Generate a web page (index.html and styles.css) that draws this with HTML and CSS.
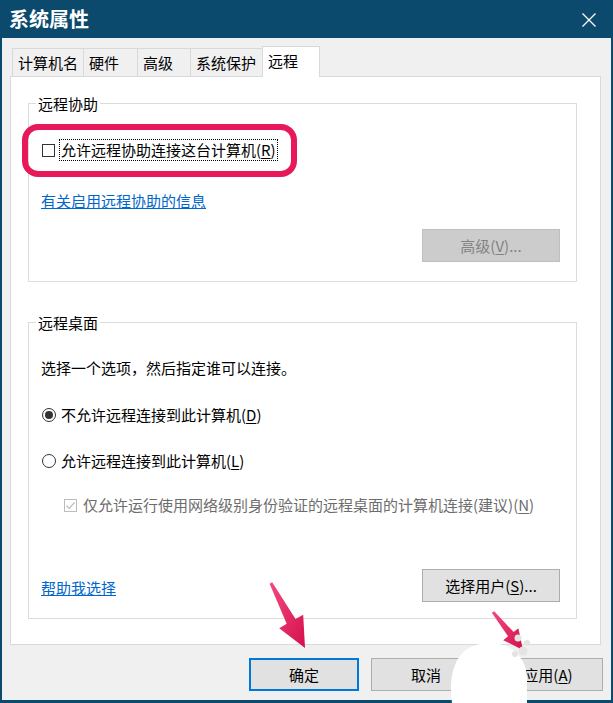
FILE: index.html
```html
<!DOCTYPE html>
<html lang="zh-CN">
<head>
<meta charset="utf-8">
<title>系统属性</title>
<link rel="stylesheet" href="styles.css">
</head>
<body>
<div class="window">
  <div class="titlebar">
    <span class="title">系统属性</span>
    <svg class="close" width="14" height="14" viewBox="0 0 14 14"><path d="M0.5 0.5L13.5 13.5M13.5 0.5L0.5 13.5" stroke="#ffffff" stroke-width="1.3" fill="none"/></svg>
  </div>
  <div class="client">
    <div class="tabs">
      <div class="tab t1">计算机名</div>
      <div class="tab t2">硬件</div>
      <div class="tab t3">高级</div>
      <div class="tab t4">系统保护</div>
      <div class="tab t5 active">远程</div>
    </div>
    <div class="panel">
      <div class="group g1">
        <span class="legend">远程协助</span>
        <div class="row r-assist">
          <span class="check"></span>
          <span class="label focus">允许远程协助连接这台计算机(<u>R</u>)</span>
        </div>
        <div class="highlight"></div>
        <div class="row r-link"><a class="link">有关启用远程协助的信息</a></div>
        <div class="btn-row r-adv"><button class="btn disabled">高级(<u>V</u>)...</button></div>
      </div>
      <div class="group g2">
        <span class="legend">远程桌面</span>
        <div class="row r-desc">选择一个选项，然后指定谁可以连接。</div>
        <div class="row r-radio1">
          <span class="radio on"></span>
          <span class="label">不允许远程连接到此计算机(<u>D</u>)</span>
        </div>
        <div class="row r-radio2">
          <span class="radio"></span>
          <span class="label">允许远程连接到此计算机(<u>L</u>)</span>
        </div>
        <div class="row r-nla">
          <span class="check checked-disabled">
            <svg width="11" height="11" viewBox="0 0 11 11"><path d="M1.5 5.8L4.2 8.4L9.6 2.4" stroke="#bdbdbd" stroke-width="1.3" fill="none"/></svg>
          </span>
          <span class="label muted">仅允许运行使用网络级别身份验证的远程桌面的计算机连接(建议)(<u>N</u>)</span>
        </div>
        <div class="bottom-row">
          <a class="link help">帮助我选择</a>
          <button class="btn">选择用户(<u>S</u>)...</button>
        </div>
      </div>
    </div>
    <div class="footer">
      <button class="btn fbtn primary">确定</button>
      <button class="btn fbtn">取消</button>
      <button class="btn fbtn">应用(<u>A</u>)</button>
    </div>
  </div>
  <svg class="overlay" width="613" height="703" viewBox="0 0 613 703">
    <defs>
      <linearGradient id="pk" x1="0" y1="0" x2="1" y2="1">
        <stop offset="0" stop-color="#f24a80"/>
        <stop offset="1" stop-color="#d5104c"/>
      </linearGradient>
    </defs>
    <polygon fill="url(#pk)" points="269.6,583.7 286.7,623.7 279.2,628.2 305,648 303.2,614.8 295.5,619.1 272.2,582.3"/>
    <polygon fill="url(#pk)" points="491.8,612.8 508.0,636.3 503.2,640.2 523,650 518.4,628.2 513.6,632.1 494.2,611.2"/>
    <path fill="#ffffff" d="M452,703 C449,683 452,660 466,650 C478,641 498,641 510,648 C521,655 528,666 527,682 L527,703 Z"/>
    <g fill="#e4e4e4">
      <circle cx="518" cy="638" r="3.5"/>
      <circle cx="527" cy="643" r="3"/>
      <circle cx="523" cy="651" r="4.5"/>
      <circle cx="515" cy="654" r="3"/>
    </g>
  </svg>
</div>
</body>
</html>
```
FILE: styles.css
```css
* { box-sizing: border-box; }
html, body { margin: 0; padding: 0; }
body {
  width: 613px;
  height: 703px;
  overflow: hidden;
  font-family: "Noto Sans CJK SC", "Noto Sans", sans-serif;
  font-size: 15px;
  color: #000;
  background: #0c4a6d;
}
.window {
  position: relative;
  width: 613px;
  height: 703px;
  display: flex;
  flex-direction: column;
  background: #0c4a6d;
}
.titlebar {
  height: 38px;
  flex: none;
  display: flex;
  align-items: center;
  justify-content: space-between;
  padding: 0 17px 0 9px;
}
.title {
  color: #fff;
  font-size: 20px;
  font-weight: bold;
  line-height: 38px;
  letter-spacing: 0;
}
.close { display: block; margin-top: 1px; }
.client {
  flex: 1;
  margin: 0 2px 3px 2px;
  background: #f0f0f0;
  padding-top: 8px;
  display: flex;
  flex-direction: column;
}
.tabs {
  height: 30px;
  display: flex;
  align-items: flex-end;
  padding-left: 10px;
}
.tab {
  height: 28px;
  border: 1px solid #d9d9d9;
  border-bottom: none;
  background: #f0f0f0;
  padding: 4px 0 0 5px;
  line-height: 20px;
  white-space: nowrap;
  margin-left: -1px;
}
.t1 { width: 72px; margin-left: 0; }
.t2 { width: 55px; }
.t3 { width: 54px; }
.t4 { width: 73px; }
.t5 { width: 58px; }
.tab.active {
  height: 31px;
  background: #fff;
  margin-bottom: -1px;
  position: relative;
  z-index: 1;
}
.panel {
  margin: 0 10px 0 8px;
  height: 569px;
  flex: none;
  background: #fff;
  border: 1px solid #d9d9d9;
  padding: 26px 0 0 17px;
}
.group {
  position: relative;
  width: 549px;
  border: 1px solid #dcdcdc;
  padding-left: 12px;
  padding-right: 16px;
  display: flex;
  flex-direction: column;
}
.g1 { height: 179px; padding-top: 36px; }
.g2 { height: 297px; margin-top: 40px; padding-top: 35px; }
.legend {
  position: absolute;
  left: 7px;
  top: -10px;
  background: #fff;
  padding: 0 2px;
  line-height: 20px;
}
.row {
  display: flex;
  align-items: center;
  height: 20px;
  line-height: 20px;
  white-space: nowrap;
}
.r-link { margin-top: 31px; }
.r-radio1 { margin-top: 27px; }
.r-radio2 { margin-top: 26px; }
.r-nla { margin-top: 24px; padding-left: 22px; }
.check {
  width: 13px;
  height: 13px;
  border: 1px solid #333;
  background: #fff;
  margin-left: 1px;
  flex: none;
  display: flex;
  align-items: center;
  justify-content: center;
}
.checked-disabled { border-color: #bcbcbc; }
.checked-disabled svg { display: block; }
.radio {
  width: 14px;
  height: 14px;
  border: 1px solid #333;
  border-radius: 50%;
  margin-left: 1px;
  flex: none;
  display: flex;
  align-items: center;
  justify-content: center;
}
.radio.on::after {
  content: "";
  width: 8px;
  height: 8px;
  border-radius: 50%;
  background: #333;
}
.label { margin-left: 5px; }
.label.focus {
  margin-left: 4px;
  border: 1px dotted #000;
  padding: 0 1px;
  line-height: 20px;
}
.label.muted { color: #6d6d6d; margin-left: 6px; }
.highlight {
  position: absolute;
  left: -7px;
  top: 20px;
  width: 275px;
  height: 53px;
  border: 6px solid #e8195b;
  border-radius: 16px;
}
.link {
  color: #0066cc;
  text-decoration: underline;
  line-height: 20px;
}
.btn-row {
  display: flex;
  justify-content: flex-end;
}
.r-adv { margin-top: 18px; }
.btn {
  font-family: inherit;
  font-size: 15px;
  color: #000;
  width: 138px;
  height: 33px;
  background: #e1e1e1;
  border: 1px solid #adadad;
  padding: 0;
  line-height: 20px;
}
.btn.disabled {
  background: #cccccc;
  border-color: #bfbfbf;
  color: #838383;
}
.bottom-row {
  margin-top: 54px;
  display: flex;
  align-items: center;
  justify-content: space-between;
}
.help { margin-top: 4px; }
.footer {
  display: flex;
  justify-content: flex-end;
  gap: 12px;
  padding: 13px 8px 0 0;
}
.fbtn { width: 110px; height: 33px; }
.fbtn.primary { border: 2px solid #0078d7; }
u { text-decoration: underline; text-underline-offset: 2px; }
.overlay {
  position: absolute;
  left: 0;
  top: 0;
  pointer-events: none;
}
```
